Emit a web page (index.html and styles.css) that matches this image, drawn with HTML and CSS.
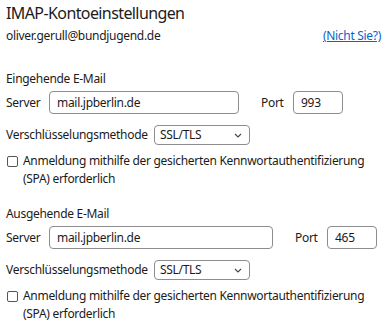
FILE: index.html
```html
<!DOCTYPE html>
<html lang="de">
<head>
    <meta charset="UTF-8">
    <title>IMAP-Kontoeinstellungen</title>
    <link rel="stylesheet" href="styles.css">
</head>
<body>
<main class="dialog">
    <h1 class="title">IMAP-Kontoeinstellungen</h1>
    <div class="account">
        <span>oliver.gerull@bundjugend.de</span>
        <a href="#" class="not-you">(Nicht Sie?)</a>
    </div>

    <section class="group">
        <h2 class="group-title">Eingehende E-Mail</h2>
        <div class="server-row">
            <span class="label server-label">Server</span>
            <div class="field server-in">mail.jpberlin.de</div>
            <span class="label port-label">Port</span>
            <div class="field port">993</div>
        </div>
        <div class="enc-row">
            <span class="label enc-label">Verschlüsselungsmethode</span>
            <div class="select">
                <span>SSL/TLS</span>
                <svg class="chevron" width="8" height="5" viewBox="0 0 8 5"><path d="M1 1l3 3 3-3" fill="none" stroke="#444" stroke-width="1.1"/></svg>
            </div>
        </div>
        <div class="check">
            <span class="box"></span>
            <span class="check-text">Anmeldung mithilfe der gesicherten Kennwortauthentifizierung<br>(SPA) erforderlich</span>
        </div>
    </section>

    <section class="group">
        <h2 class="group-title">Ausgehende E-Mail</h2>
        <div class="server-row">
            <span class="label server-label">Server</span>
            <div class="field server-out">mail.jpberlin.de</div>
            <span class="label port-label">Port</span>
            <div class="field port">465</div>
        </div>
        <div class="enc-row">
            <span class="label enc-label">Verschlüsselungsmethode</span>
            <div class="select">
                <span>SSL/TLS</span>
                <svg class="chevron" width="8" height="5" viewBox="0 0 8 5"><path d="M1 1l3 3 3-3" fill="none" stroke="#444" stroke-width="1.1"/></svg>
            </div>
        </div>
        <div class="check">
            <span class="box"></span>
            <span class="check-text">Anmeldung mithilfe der gesicherten Kennwortauthentifizierung<br>(SPA) erforderlich</span>
        </div>
    </section>
</main>
</body>
</html>
```

FILE: styles.css
```css
body {
    margin: 0;
    background-color: #fff;
    color: #1b1b1b;
    font-family: "Noto Sans", "Open Sans", sans-serif;
    font-size: 12px;
    letter-spacing: -0.3px;
}

.dialog {
    padding: 0 6px;
}

.title {
    margin: 0;
    padding-top: 2px;
    font-size: 16px;
    font-weight: normal;
    line-height: 23px;
    letter-spacing: -0.6px;
}

.account {
    display: flex;
    justify-content: space-between;
    align-items: center;
    margin-top: 2px;
    line-height: 18px;
}

.not-you {
    color: #0a64c8;
}

.group {
    margin-top: 26px;
}

.group + .group {
    margin-top: 18px;
}

.group-title {
    margin: 0;
    font-size: 12px;
    font-weight: normal;
    line-height: 16px;
}

.server-row {
    display: flex;
    align-items: center;
    margin-top: 4px;
}

.label {
    flex: none;
    line-height: 16px;
}

.server-label {
    width: 43px;
}

.field {
    box-sizing: border-box;
    height: 23px;
    padding: 2px 7px;
    border: 1px solid #8d8d8d;
    border-radius: 4px;
    line-height: 17px;
}

.server-in {
    width: 190px;
}

.server-out {
    width: 224px;
}

.port-label {
    width: 32px;
    margin-left: 22px;
}

.port {
    width: 50px;
}

.enc-row {
    display: flex;
    align-items: center;
    margin-top: 11px;
}

.enc-label {
    width: 148px;
}

.select {
    box-sizing: border-box;
    display: flex;
    align-items: center;
    justify-content: space-between;
    height: 20px;
    width: 96px;
    padding: 0 7px 0 5px;
    border: 1px solid #8d8d8d;
    border-radius: 4px;
    line-height: 16px;
}

.check {
    display: flex;
    align-items: flex-start;
    margin-top: 8px;
}

.box {
    box-sizing: border-box;
    flex: none;
    width: 11px;
    height: 11px;
    margin: 3px 5px 0 1px;
    border: 1px solid #555;
    border-radius: 2px;
}

.check-text {
    line-height: 18px;
    margin-top: -1px;
}
```
